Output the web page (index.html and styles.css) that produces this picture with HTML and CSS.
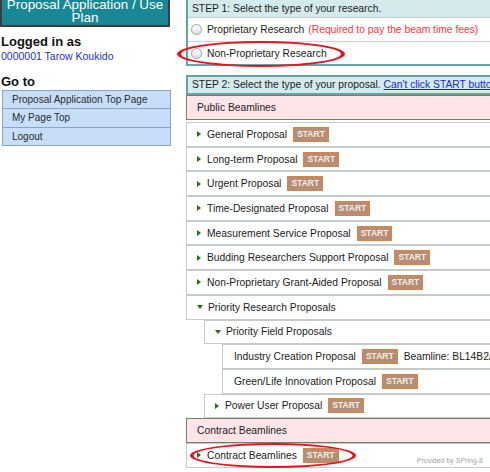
FILE: index.html
```html
<!DOCTYPE html>
<html lang="en">
<head>
<meta charset="utf-8">
<title>Proposal Application / Use Plan</title>
<link rel="stylesheet" href="styles.css">
</head>
<body>
<div class="page">
  <aside class="side">
    <div class="side-title">Proposal Application / Use Plan</div>
    <h2 class="side-h login-h">Logged in as</h2>
    <div class="user"><a href="#">0000001 Tarow Koukido</a></div>
    <h2 class="side-h goto-h">Go to</h2>
    <ul class="nav">
      <li>Proposal Application Top Page</li>
      <li>My Page Top</li>
      <li>Logout</li>
    </ul>
  </aside>
  <main class="main">
    <section class="step">
      <div class="step-head">STEP 1: Select the type of your research.</div>
      <label class="radio-row"><input type="radio" name="research" class="radio"><span>Proprietary Research</span><span class="req">(Required to pay the beam time fees)</span></label>
      <label class="radio-row last"><input type="radio" name="research" class="radio"><span>Non-Proprietary Research</span></label>
    </section>
    <section class="step step2">
      <div class="step-head">STEP 2: Select the type of your proposal. <a href="#" class="help">Can't click START button?</a></div>
    </section>
    <div class="tree">
      <div class="grp first">Public Beamlines</div>
      <div class="row"><i class="tri"></i>General Proposal<span class="start">START</span></div>
      <div class="row"><i class="tri"></i>Long-term Proposal<span class="start">START</span></div>
      <div class="row"><i class="tri"></i>Urgent Proposal<span class="start">START</span></div>
      <div class="row"><i class="tri"></i>Time-Designated Proposal<span class="start">START</span></div>
      <div class="row"><i class="tri"></i>Measurement Service Proposal<span class="start">START</span></div>
      <div class="row"><i class="tri"></i>Budding Researchers Support Proposal<span class="start">START</span></div>
      <div class="row"><i class="tri"></i>Non-Proprietary Grant-Aided Proposal<span class="start">START</span></div>
      <div class="row"><i class="tri down"></i>Priority Research Proposals</div>
      <div class="sub">
        <div class="row"><i class="tri down"></i>Priority Field Proposals</div>
        <div class="sub">
          <div class="row leaf">Industry Creation Proposal<span class="start">START</span><span class="bl">Beamline: BL14B2/BL19B2</span></div>
          <div class="row leaf">Green/Life Innovation Proposal<span class="start">START</span></div>
        </div>
        <div class="row"><i class="tri"></i>Power User Proposal<span class="start">START</span></div>
      </div>
      <div class="grp">Contract Beamlines</div>
      <div class="row"><i class="tri"></i>Contract Beamlines<span class="start">START</span></div>
    </div>
  </main>
</div>
<svg class="marks" width="490" height="472" viewBox="0 0 490 472" aria-hidden="true">
  <path fill="#e5141c" fill-rule="evenodd" d="M177,54 a84,13 0 1,0 168,0 a84,13 0 1,0 -168,0 Z M181,54 a80,11 0 1,0 160,0 a80,11 0 1,0 -160,0 Z"/>
  <path fill="#e5141c" fill-rule="evenodd" d="M190,455.5 a83,12.5 0 1,0 166,0 a83,12.5 0 1,0 -166,0 Z M193.5,455.5 a79.5,10.5 0 1,0 159,0 a79.5,10.5 0 1,0 -159,0 Z"/>
</svg>
<div class="credit">Provided by SPring-8</div>
</body>
</html>
```

FILE: styles.css
```css
html, body {
  margin: 0;
  padding: 0;
  background: #fff;
  overflow: hidden;
}
body {
  font-family: "Liberation Sans", Arial, Helvetica, sans-serif;
  color: #1c1c1c;
  width: 490px;
  height: 472px;
  position: relative;
}
.page {
  display: flex;
  align-items: flex-start;
  gap: 15px;
}

/* sidebar */
.side {
  width: 171px;
  flex: none;
}
.side-title {
  margin: -4px 1px 0 0;
  background: #1a8796;
  color: #fff;
  border: 2px solid #3d3d3d;
  padding: 0 2px 1px;
  font-size: 13.4px;
  line-height: 13px;
  text-align: center;
}
.side-h {
  margin: 0;
  font-size: 13px;
  font-weight: bold;
  line-height: 15px;
  padding-left: 1px;
  color: #111;
}
.login-h { margin-top: 7px; }
.user {
  margin-top: 1px;
  font-size: 10.5px;
  line-height: 13px;
  padding-left: 1px;
}
.user a {
  color: #1b2fd6;
  text-decoration: none;
}
.goto-h { margin-top: 11px; }
.nav {
  list-style: none;
  margin: 1px 0 0 2px;
  padding: 0;
  border: 1px solid #8aa3c2;
  border-bottom: none;
}
.nav li {
  height: 17.3px;
  line-height: 17px;
  border-bottom: 1px solid #8aa3c2;
  background: #c8ddf8;
  padding-left: 9px;
  font-size: 10px;
  color: #2a2a2a;
}

/* main */
.main {
  flex: none;
  width: 420px;
  margin-top: -2px;
}
.step {
  border: 2px solid #67a2a8;
}
.step-head {
  background: #d4eaec;
  height: 17px;
  line-height: 17px;
  padding-left: 4px;
  font-size: 10.3px;
  white-space: nowrap;
  border-bottom: 1px solid #c5cfcf;
}
.step2 { margin-top: 9px; }
.step2 .step-head {
  height: 16px;
  line-height: 16px;
  border-bottom: none;
}
.help {
  color: #2323e0;
  text-decoration: underline;
}
.radio-row {
  display: flex;
  align-items: center;
  height: 23px;
  border-bottom: 1px solid #cdd4d4;
  font-size: 10.3px;
  white-space: nowrap;
}
.radio-row.last {
  height: 22px;
  border-bottom: none;
}
.radio {
  appearance: none;
  -webkit-appearance: none;
  width: 11px;
  height: 11px;
  border-radius: 50%;
  border: 1px solid #a0a0a0;
  background: linear-gradient(#ffffff, #e0e0e0);
  margin: 0 5px 0 3px;
  box-sizing: border-box;
}
.req {
  color: #f2383c;
  margin-left: 4px;
}

/* tree */
.tree {
  font-size: 10.3px;
  white-space: nowrap;
}
.row, .grp {
  box-sizing: border-box;
  height: 24.7px;
  display: flex;
  align-items: center;
  padding-left: 10px;
}
.row {
  border: 1px solid #c3cbcb;
  background: #fff;
}
.grp {
  border: 1px solid #7c7c5e;
  background: #fde5ea;
}
.grp.first {
  height: 25px;
  margin-bottom: 2px;
}
.sub { margin-left: 18px; }
.leaf { padding-left: 11px; }
.tri {
  width: 0;
  height: 0;
  border-left: 4px solid #2e6a1c;
  border-top: 3.5px solid transparent;
  border-bottom: 3.5px solid transparent;
  margin-right: 6px;
}
.tri.down {
  border-top: 4px solid #2e6a1c;
  border-left: 3.5px solid transparent;
  border-right: 3.5px solid transparent;
  border-bottom: 0;
  margin-right: 5px;
}
.start {
  display: inline-block;
  margin-left: 6px;
  background: #b88d75;
  border: 1px solid #d88443;
  color: #f5ede6;
  font-weight: bold;
  font-size: 8.5px;
  line-height: 13px;
  padding: 0 3px;
}
.bl { margin-left: 6px; }

/* overlays */
.marks {
  position: absolute;
  left: 0;
  top: 0;
  pointer-events: none;
}
.credit {
  position: absolute;
  right: 7px;
  bottom: 8px;
  font-size: 7px;
  color: #a3a3a3;
}
```
